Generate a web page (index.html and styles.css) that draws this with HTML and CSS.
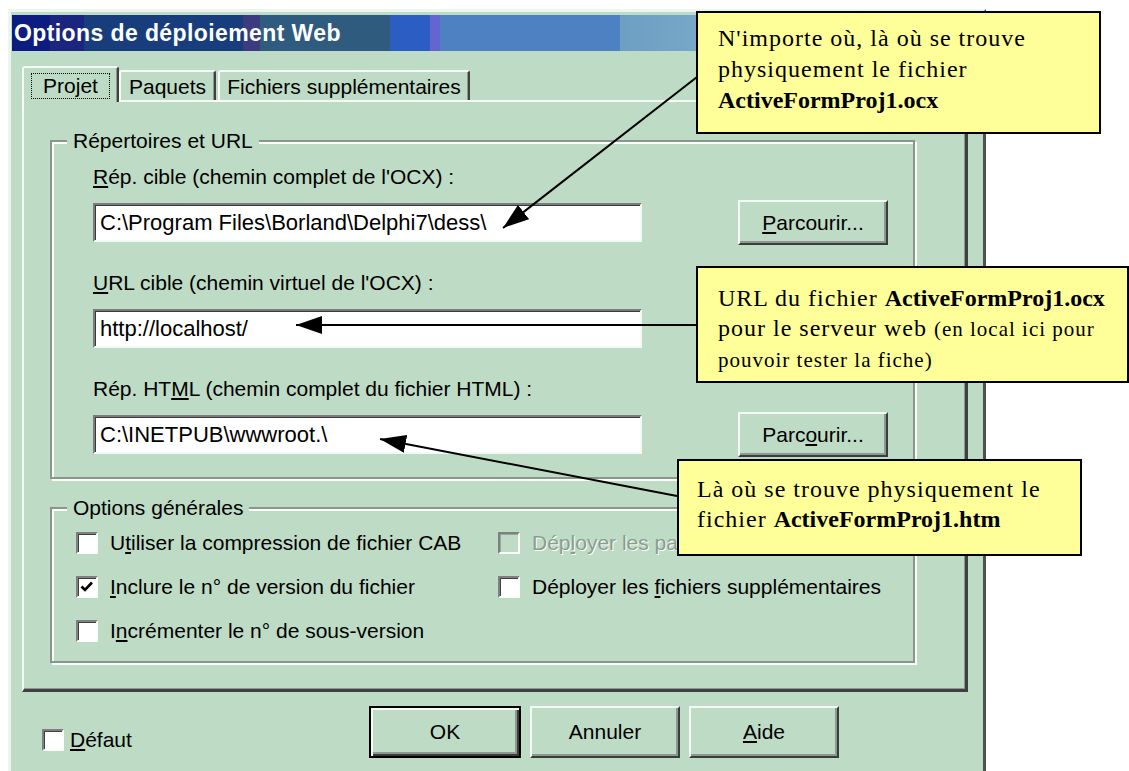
FILE: index.html
```html
<!DOCTYPE html>
<html lang="fr">
<head>
    <meta charset="utf-8">
    <title>Options de déploiement Web</title>
    <link rel="stylesheet" href="styles.css">
</head>
<body>
<div class="page">
    <div class="dialog">
        <div class="titlebar">Options de déploiement Web</div>

        <div class="tabs">
            <div class="tab tab-active"><span class="focus">Projet</span></div>
            <div class="tab">Paquets</div>
            <div class="tab tab-wide">Fichiers supplémentaires</div>
        </div>

        <div class="panel">
            <fieldset class="group">
                <legend>Répertoires et URL</legend>
                <div class="group-body dirs">
                    <div class="field-label"><u>R</u>ép. cible (chemin complet de l'OCX) :</div>
                    <div class="field-row">
                        <div class="textbox">C:\Program Files\Borland\Delphi7\dess\</div>
                        <button class="btn btn-browse"><u>P</u>arcourir...</button>
                    </div>
                    <div class="field-label"><u>U</u>RL cible (chemin virtuel de l'OCX) :</div>
                    <div class="field-row">
                        <div class="textbox">http://localhost/</div>
                    </div>
                    <div class="field-label">Rép. HT<u>M</u>L (chemin complet du fichier HTML) :</div>
                    <div class="field-row">
                        <div class="textbox">C:\INETPUB\wwwroot.\</div>
                        <button class="btn btn-browse">Parc<u>o</u>urir...</button>
                    </div>
                </div>
            </fieldset>

            <fieldset class="group group-opts">
                <legend>Options générales</legend>
                <div class="group-body opts">
                    <label class="check"><span class="box"></span><span>U<u>t</u>iliser la compression de fichier CAB</span></label>
                    <label class="check disabled"><span class="box"></span><span>Dép<u>l</u>oyer les paquets requis</span></label>
                    <label class="check">
                        <span class="box">
                            <svg width="16" height="16" viewBox="0 0 16 16"><path d="M2.5 7.5 L6 11 L13 3.5" fill="none" stroke="#000" stroke-width="2.6"/></svg>
                        </span>
                        <span><u>I</u>nclure le n° de version du fichier</span>
                    </label>
                    <label class="check"><span class="box"></span><span>Déployer les <u>f</u>ichiers supplémentaires</span></label>
                    <label class="check"><span class="box"></span><span>I<u>n</u>crémenter le n° de sous-version</span></label>
                </div>
            </fieldset>
        </div>

        <div class="footer">
            <label class="check check-default"><span class="box"></span><span><u>D</u>éfaut</span></label>
            <div class="actions">
                <button class="btn btn-default">OK</button>
                <button class="btn">Annuler</button>
                <button class="btn"><u>A</u>ide</button>
            </div>
        </div>
    </div>

    <svg class="arrows" width="1129" height="771" viewBox="0 0 1129 771">
        <defs>
            <marker id="head" markerUnits="userSpaceOnUse" markerWidth="26" markerHeight="18" refX="26" refY="9" orient="auto">
                <path d="M0 0 L26 9 L0 18 Z" fill="#000"/>
            </marker>
        </defs>
        <line x1="697" y1="77" x2="503" y2="228" stroke="#000" stroke-width="2" marker-end="url(#head)"/>
        <line x1="697" y1="325" x2="296" y2="325" stroke="#000" stroke-width="2" marker-end="url(#head)"/>
        <line x1="677" y1="496" x2="380" y2="439" stroke="#000" stroke-width="2" marker-end="url(#head)"/>
    </svg>

    <div class="callout callout-ocx">
        N'importe où, là où se trouve<br>
        physiquement le fichier<br>
        <b>ActiveFormProj1.ocx</b>
    </div>
    <div class="callout callout-url">
        URL du fichier <b>ActiveFormProj1.ocx</b><br>
        pour le serveur web <small>(en local ici pour</small><br>
        <small>pouvoir tester la fiche)</small>
    </div>
    <div class="callout callout-htm">
        Là où se trouve physiquement le<br>
        fichier <b>ActiveFormProj1.htm</b>
    </div>
</div>
</body>
</html>
```

FILE: styles.css
```css
* {
    box-sizing: border-box;
}
html, body {
    margin: 0;
    background: #fff;
    overflow: hidden;
}
.page {
    position: relative;
    width: 1129px;
    height: 771px;
    padding: 9px 0 0 8px;
    overflow: hidden;
    font-family: "Liberation Sans", Arial, sans-serif;
    font-size: 21px;
    color: #000;
}

/* dialog frame */
.dialog {
    width: 978px;
    height: 800px;
    padding: 3px 1px 0;
    background: #bedbc6;
    border-left: 3px solid #edf5ef;
    border-top: 3px solid #edf5ef;
    border-right: 3px solid #505050;
}
.titlebar {
    height: 36px;
    padding-left: 2px;
    line-height: 36px;
    color: #fff;
    font-size: 23px;
    font-weight: 700;
    letter-spacing: 0.4px;
    white-space: nowrap;
    background: linear-gradient(to right,
        #0c1c80 0, #0c1c80 38px,
        #1a2580 38px, #1a2580 72px,
        #173d7d 72px, #173d7d 231px,
        #3b3c80 231px, #3b3c80 248px,
        #2f5b7e 248px, #2f5b7e 378px,
        #2b5dc3 378px, #2b5dc3 418px,
        #6565d2 418px, #6565d2 428px,
        #4d81c2 428px, #4d81c2 608px,
        #6d9fc2 608px, #9cc3e2 970px);
}

/* tabs */
.tabs {
    position: relative;
    z-index: 1;
    display: flex;
    align-items: flex-end;
    height: 36px;
    margin: 15px 0 0 10px;
}
.tab {
    display: flex;
    align-items: center;
    justify-content: center;
    width: 97px;
    height: 30px;
    margin-bottom: 2px;
    padding-top: 1px;
    background: #bedbc6;
    border-top: 2px solid #f7fbf8;
    border-left: 2px solid #f7fbf8;
    border-right: 2px solid #404040;
    border-radius: 3px 3px 0 0;
    box-shadow: inset -1px 0 0 #8d9990;
    white-space: nowrap;
}
.tab-active {
    height: 36px;
    margin-bottom: 0;
}
.tab-wide {
    width: 252px;
    margin-left: 2px;
}
.focus {
    padding: 0 11px;
    line-height: 24px;
    outline: 1px dotted #000;
}

/* page of the tab control */
.panel {
    margin: -2px 14px 0 10px;
    padding: 27px 50px 26px 26px;
    border-top: 2px solid #f7fbf8;
    border-left: 2px solid #f7fbf8;
    border-right: 3px solid #404040;
    border-bottom: 3px solid #404040;
    box-shadow: inset -1px -1px 0 #8d9990;
}
.group {
    margin: 0;
    padding: 0;
    min-width: 0;
    border: 2px solid #8a968d;
    box-shadow: inset 2px 2px 0 #fbfdfb, 2px 2px 0 #fbfdfb;
}
.group legend {
    margin-left: 15px;
    padding: 0 6px;
    line-height: 24px;
    background: #bedbc6;
}
.group-opts {
    margin-top: 17px;
}
.dirs {
    padding: 12px 0 20px 41px;
}
.field-label {
    line-height: 24px;
    white-space: nowrap;
}
.field-row + .field-label {
    margin-top: 26px;
}
.field-row {
    display: flex;
    align-items: center;
    height: 45px;
    margin-top: 11px;
}
.textbox {
    width: 549px;
    height: 39px;
    padding-left: 5px;
    background: #fff;
    border: 2px solid;
    border-color: #7c7c7c #f4f9f5 #f4f9f5 #7c7c7c;
    box-shadow: inset 1px 1px 0 #3a3a3a;
    font-size: 22px;
    line-height: 35px;
    white-space: nowrap;
}

/* buttons */
.btn {
    padding: 0;
    width: 150px;
    height: 52px;
    font: inherit;
    color: #000;
    background: #bedbc6;
    border: 2px solid;
    border-color: #f6faf7 #3c3c3c #3c3c3c #f6faf7;
    box-shadow: inset -2px -2px 0 #8d9990;
    white-space: nowrap;
}
.btn-browse {
    height: 45px;
    margin-left: 96px;
}
.btn-default {
    width: 152px;
    border-color: #000;
    box-shadow: inset 2px 2px 0 #f6faf7, inset -2px -2px 0 #3c3c3c, inset -4px -4px 0 #8d9990;
}

/* check boxes */
.opts {
    display: grid;
    grid-template-columns: 422px 1fr;
    grid-auto-rows: 44px;
    align-items: center;
    padding: 1px 0 8px 24px;
}
.check {
    display: flex;
    align-items: center;
    gap: 12px;
    line-height: 24px;
    white-space: nowrap;
}
.box {
    flex: none;
    width: 22px;
    height: 22px;
    padding: 1px;
    background: #fff;
    border: 2px solid;
    border-color: #808080 #fcfefc #fcfefc #808080;
    box-shadow: inset 1px 1px 0 #404040;
}
.box svg {
    display: block;
}
.disabled {
    color: #8e9b91;
    text-shadow: 1px 1px 0 #fbfdfb;
}
.disabled .box {
    background: #bedbc6;
    box-shadow: inset 1px 1px 0 #9aa69d;
}

/* bottom row */
.footer {
    display: flex;
    justify-content: space-between;
    align-items: flex-start;
    padding: 14px 143px 0 30px;
}
.check-default {
    gap: 6px;
    margin-top: 22px;
}
.actions {
    display: flex;
    gap: 9px;
}

/* annotations drawn over the screenshot */
.arrows {
    position: absolute;
    left: 0;
    top: 0;
}
.callout {
    position: absolute;
    background: #ffff99;
    border: 2px solid #000;
    font-family: "Liberation Serif", "Times New Roman", serif;
    font-size: 24px;
    letter-spacing: 1px;
    line-height: 30px;
    white-space: nowrap;
}
.callout b {
    letter-spacing: 0;
}
.callout small {
    font-size: 21px;
}
.callout-ocx {
    left: 696px;
    top: 11px;
    width: 405px;
    height: 123px;
    padding: 10px 0 0 20px;
    line-height: 31px;
}
.callout-url {
    left: 696px;
    top: 266px;
    width: 433px;
    height: 117px;
    padding: 15px 0 0 20px;
}
.callout-htm {
    left: 677px;
    top: 459px;
    width: 405px;
    height: 97px;
    padding: 13px 0 0 18px;
}
```
